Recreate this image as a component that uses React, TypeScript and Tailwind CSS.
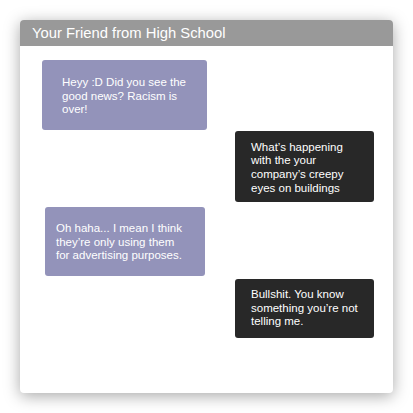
export default function App() {
  return (
    <div className="h-[413px] w-[413px] bg-white pt-5 pl-5 font-['Liberation_Sans',Arial,sans-serif]">
      <div className="flex h-[373px] w-[373px] flex-col overflow-hidden rounded-[4px] bg-white shadow-[0_3px_16px_rgba(0,0,0,0.35)]">
        {/* header */}
        <div className="flex h-[26px] items-center bg-[#999999] pl-3 text-[14.8px] text-white">
          Your Friend from High School
        </div>

        {/* messages */}
        <div className="flex flex-col">
          <Bubble side="left" className="ml-[22px] mt-[14px] w-[165px] pl-5 pr-[15px] pt-[16px] pb-[13px]">
            Heyy :D Did you see the good news? Racism is over!
          </Bubble>
          <Bubble side="right" className="ml-[215px] mt-px w-[139px] pl-4 pr-[23px] pt-[10px] pb-[7px]">
            What’s happening with the your company’s creepy eyes on buildings
          </Bubble>
          <Bubble side="left" className="ml-[25px] mt-[5px] w-[160px] pl-[11px] pr-[19px] pt-[15px] pb-[13px]">
            Oh haha... I mean I think they’re only using them for advertising purposes.
          </Bubble>
          <Bubble side="right" className="ml-[215px] mt-[3px] w-[139px] pl-4 pr-[13px] pt-[9px] pb-[9px]">
            Bullshit. You know something you’re not telling me.
          </Bubble>
        </div>
      </div>
    </div>
  );
}

function Bubble({
  side,
  className,
  children,
}: {
  side: "left" | "right";
  className: string;
  children: React.ReactNode;
}) {
  const tone = side === "left" ? "bg-[#9393ba]" : "bg-[#282828]";
  return (
    <div className={`${tone} rounded-[3px] text-[11.5px] leading-[13.6px] text-white ${className}`}>
      {children}
    </div>
  );
}
